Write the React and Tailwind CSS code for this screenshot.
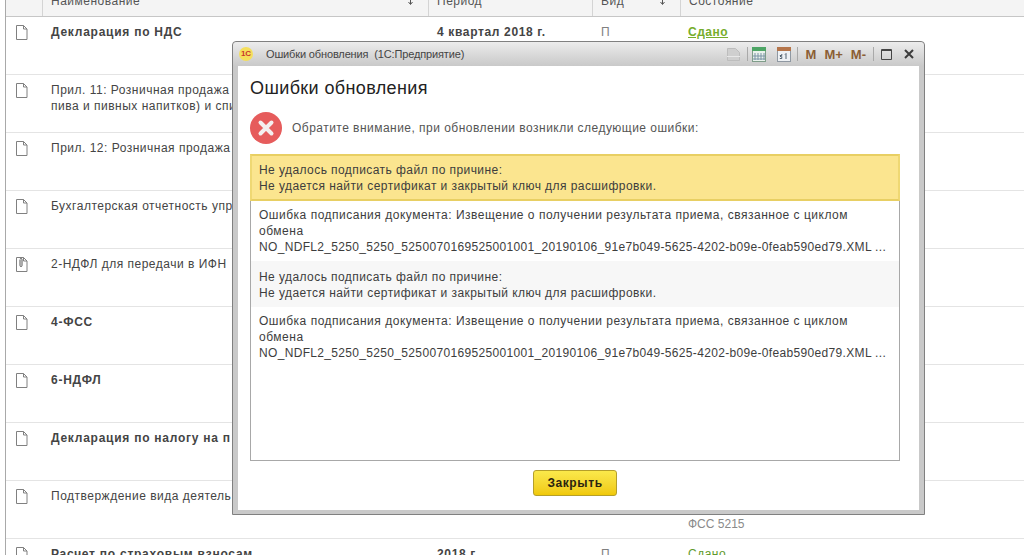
import React from "react"

const rows = [
  { name: ["Декларация по НДС"], bold: true, period: "4 квартал 2018 г.", kind: "П", status: "Сдано", bright: true },
  { name: ["Прил. 11: Розничная продажа", "пива и пивных напитков) и спи"] },
  { name: ["Прил. 12: Розничная продажа"] },
  { name: ["Бухгалтерская отчетность упр"] },
  { name: ["2-НДФЛ для передачи в ИФН"], clip: true },
  { name: ["4-ФСС"], bold: true },
  { name: ["6-НДФЛ"], bold: true },
  { name: ["Декларация по налогу на п"], bold: true },
  { name: ["Подтверждение вида деятель"], note: "ФСС 5215" },
  { name: ["Расчет по страховым взносам"], bold: true, period: "2018 г.", kind: "П", status: "Сдано" },
]

const errors = [
  { lines: ["Не удалось подписать файл по причине:", "Не удается найти сертификат и закрытый ключ для расшифровки."], active: true },
  { lines: ["Ошибка подписания документа: Извещение о получении результата приема, связанное с циклом", "обмена", "NO_NDFL2_5250_5250_5250070169525001001_20190106_91e7b049-5625-4202-b09e-0feab590ed79.XML ..."] },
  { lines: ["Не удалось подписать файл по причине:", "Не удается найти сертификат и закрытый ключ для расшифровки."], alt: true },
  { lines: ["Ошибка подписания документа: Извещение о получении результата приема, связанное с циклом", "обмена", "NO_NDFL2_5250_5250_5250070169525001001_20190106_91e7b049-5625-4202-b09e-0feab590ed79.XML ..."] },
]

function DocIcon({ clip }) {
  return (
    <svg width="13" height="15" viewBox="0 0 13 15" fill="none" stroke="#808080" strokeWidth="1">
      <path d="M1.500 .5h7l3.500 3.500v10.500h-10.500z" fill="#fff" />
      <path d="M8.500 .5v3.500h3.500" />
      {clip && <path d="M5 3v5.500a1 1 0 0 0 2 0v-6a1 1 0 0 0-2 0" stroke="#555" />}
    </svg>
  )
}

function SortArrow() {
  return (
    <svg width="7" height="8" viewBox="0 0 7 8" fill="none" stroke="#555" strokeWidth="1">
      <path d="M3.500 0v6M1.500 4l2 2.500 2-2.500" />
    </svg>
  )
}

function HeaderCell({ className, label, arrow }) {
  return (
    <div className={"flex items-start justify-between border-l border-[#d4d4d4] pl-2 pr-[14px] " + className}>
      <span className="leading-[14px] -mt-[6px]">{label}</span>
      {arrow && <span className="-mt-[2px]"><SortArrow /></span>}
    </div>
  )
}

function Row({ row }) {
  return (
    <div className="flex h-[58px] border-b border-[#e4e4e4] text-[12px] leading-4 tracking-[.5px] text-[#444]">
      <div className="w-[36px] pl-[9px] pt-[8px]">
        <DocIcon clip={row.clip} />
      </div>
      <div className={"w-[386px] pl-[9px] pt-[7px] whitespace-nowrap " + (row.bold ? "font-bold tracking-[.75px]" : "")}>
        {row.name.map((line) => <div key={line}>{line}</div>)}
      </div>
      <div className="w-[164px] pl-[9px] pt-[7px] font-bold tracking-[.65px]">{row.period}</div>
      <div className="w-[88px] pl-[9px] pt-[7px] text-[#808080]">{row.kind}</div>
      <div className="pl-[8px] pt-[7px]">
        {row.status && (
          <span className={"underline " + (row.bright ? "font-bold text-[#76ad2c]" : "text-[#5f9a2b]")}>{row.status}</span>
        )}
        {row.note && <span className="relative top-[28px] text-[#8a8a8a] tracking-normal">{row.note}</span>}
      </div>
    </div>
  )
}

function Toolbar() {
  return (
    <div className="flex items-center">
      <svg className="mr-[6px]" width="15" height="15" viewBox="0 0 15 15" fill="#cfcfcf" stroke="#bdbdbd">
        <path d="M1.500 1.500h8l4 4v8h-12z" />
        <path d="M1 9.500h13" stroke="#e8e8e8" />
      </svg>
      <div className="w-px h-[14px] bg-[#a9a9a9] mr-[4px]" />
      <svg className="mr-[11px]" width="14" height="15" viewBox="0 0 14 15">
        <rect x=".5" y=".5" width="13" height="14" fill="#e9f2ec" stroke="#7f9d8a" />
        <rect x="0" y="0" width="14" height="4" fill="#4da565" />
        <path d="M3 6v7M6 6v7M9 6v7M12 6v7M1 9h12M1 12h12" stroke="#7b93a5" strokeWidth="1" />
      </svg>
      <svg className="mr-[6px]" width="14" height="15" viewBox="0 0 14 15">
        <rect x=".5" y=".5" width="13" height="14" fill="#eef1f4" stroke="#8f98a2" />
        <rect x="0" y="0" width="14" height="4" fill="#b5754a" />
        <path d="M3 9.500h1.500M4.800 7v1.500h-2M4.800 9.500v2h-2M8 7.500l1-1v5.500" stroke="#50606e" strokeWidth="1" fill="none" />
      </svg>
      <div className="w-px h-[14px] bg-[#a9a9a9] mr-[8px]" />
      <div className="flex gap-[8px] font-bold text-[13px] text-[#8b5e34] leading-none mr-[7px]">
        <span>M</span>
        <span>M+</span>
        <span>M-</span>
      </div>
      <div className="w-px h-[14px] bg-[#a9a9a9] mr-[7px]" />
      <svg className="mr-[12px]" width="11" height="11" viewBox="0 0 11 11" fill="none" stroke="#444">
        <path d="M.5 .5h10v10h-10z" />
        <path d="M0 1.500h11" />
      </svg>
      <svg width="10" height="10" viewBox="0 0 10 10" fill="none" stroke="#3c3c3c" strokeWidth="2">
        <path d="M1 1l8 8M9 1l-8 8" />
      </svg>
    </div>
  )
}

function ErrorDialog() {
  return (
    <div className="absolute left-[232px] top-[41px] w-[693px] h-[474px] flex flex-col rounded-t-[4px] border border-[#808080] bg-[#c9c9c9] px-[5px] pb-[4px] text-[#333]">
      <div className="h-[24px] shrink-0 -mx-[5px] px-[6px] flex items-center justify-between rounded-t-[4px] bg-gradient-to-b from-[#ececec] to-[#c9c9c9]">
        <div className="flex items-center">
          <div className="w-[14px] h-[14px] rounded-full bg-[#f5df5c] flex items-center justify-center text-[8px] font-bold text-[#c9352b] leading-none">1С</div>
          <span className="ml-[13px] text-[11px] text-[#444] tracking-[-.14px] whitespace-pre">Ошибки обновления  (1С:Предприятие)</span>
        </div>
        <div className="mr-[4px]"><Toolbar /></div>
      </div>

      <div className="flex-1 bg-white pl-[12px] pr-[19px] flex flex-col">
        <h1 className="mt-[11px] text-[18px] leading-[22px] tracking-[.38px] text-[#222]">Ошибки обновления</h1>

        <div className="mt-[13px] flex items-center h-[32px]">
          <svg width="32" height="32" viewBox="0 0 32 32">
            <circle cx="16" cy="16" r="16" fill="#e65c5c" />
            <path d="M10.500 10.500l11 11M21.500 10.500l-11 11" stroke="#f4efef" strokeWidth="4" strokeLinecap="round" />
          </svg>
          <span className="ml-[10px] text-[12px] tracking-[.47px] text-[#555]">Обратите внимание, при обновлении возникли следующие ошибки:</span>
        </div>

        <div className="mt-[10px] h-[307px] border border-[#a8a8a8] text-[12px] leading-4 text-[#3d3d3d]">
          {errors.map((err, i) => (
            <div
              key={i}
              className={
                "whitespace-nowrap " +
                (err.active
                  ? "h-[47px] -mx-px -mt-px pl-[7px] pt-[6px] bg-[#fbe58f] border-2 border-x-[#efd873] border-y-[#e8cf63] tracking-[.43px]"
                  : err.alt
                    ? "h-[46px] pl-[8px] pt-[8px] bg-[#f7f7f7] tracking-[.43px]"
                    : "h-[60px] pl-[8px] pt-[6px] tracking-[.51px]")
              }
            >
              {err.lines.map((line, j) => (
                <div key={j} className={line.startsWith("NO_") ? "tracking-[.33px]" : ""}>{line}</div>
              ))}
            </div>
          ))}
        </div>

        <div className="mt-[9px] flex justify-center">
          <button className="w-[84px] h-[26px] rounded-[3px] border border-[#b59f2a] bg-gradient-to-b from-[#fbe94a] to-[#f0c905] text-[12px] font-bold tracking-[.6px] text-[#2b2410]">
            Закрыть
          </button>
        </div>
      </div>
    </div>
  )
}

export default function App() {
  return (
    <div className="relative w-[1024px] h-[555px] overflow-hidden bg-white font-['Liberation_Sans',Arial,sans-serif]">
      <div className="ml-[5px] border-l border-[#a9a9a9] h-full">
        <div className="flex h-[17px] overflow-hidden border-b border-[#c6c6c6] bg-[#f4f4f4] text-[12px] tracking-[.5px] text-[#555]">
          <div className="w-[36px]" />
          <HeaderCell className="w-[386px]" label="Наименование" arrow />
          <HeaderCell className="w-[164px]" label="Период" />
          <HeaderCell className="w-[88px]" label="Вид" arrow />
          <HeaderCell className="flex-1" label="Состояние" />
        </div>
        {rows.map((row, i) => <Row key={i} row={row} />)}
      </div>
      <ErrorDialog />
    </div>
  )
}
